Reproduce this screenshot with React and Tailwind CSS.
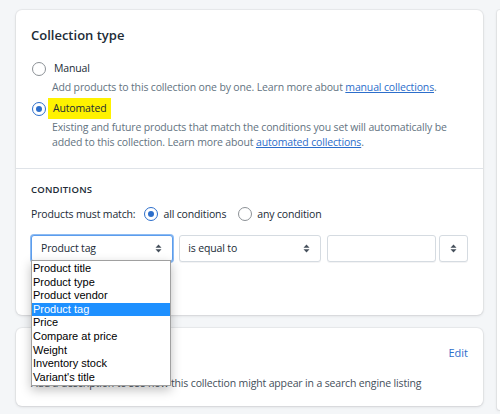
const font = { fontFamily: '"Open Sans", "Noto Sans", sans-serif' };

function Radio({ checked }) {
  return (
    <span
      className={`flex h-[14px] w-[14px] shrink-0 items-center justify-center rounded-full border bg-white ${
        checked ? 'border-[#2c6ecb]' : 'border-[#8c9196]'
      }`}
    >
      {checked && <span className="h-[6px] w-[6px] rounded-full bg-[#2c6ecb]" />}
    </span>
  );
}

function Arrows() {
  return (
    <svg width="7" height="9" viewBox="0 0 7 9" className="shrink-0">
      <path d="M3.5 0.5L6.5 3.7H0.5Z" fill="#454f5b" />
      <path d="M3.5 8.5L6.5 5.3H0.5Z" fill="#454f5b" />
    </svg>
  );
}

const options = [
  'Product title',
  'Product type',
  'Product vendor',
  'Product tag',
  'Price',
  'Compare at price',
  'Weight',
  'Inventory stock',
  "Variant's title",
];

export default function App() {
  return (
    <div
      className="relative flex h-[414px] w-[500px] overflow-hidden bg-[#f4f6f8] text-[#212b36]"
      style={font}
    >
      <div className="flex w-[483px] flex-col gap-[13px] pl-4 pt-[10px]">
        {/* collection type card */}
        <div className="h-[305px] rounded-[6px] bg-white shadow-[0_0_0_1px_rgba(63,63,68,0.05),0_1px_3px_0_rgba(63,63,68,0.15)]">
          <div className="border-b border-[#dfe3e8] px-[15px] pb-[18px] pt-[17px]">
            <h2 className="text-[13px] font-semibold leading-[16px]">Collection type</h2>
            <div className="mt-[18px] flex flex-col text-[10.5px] leading-[15px] tracking-[-0.15px]">
              <div className="flex items-center gap-[8px] pl-[1px]">
                <Radio />
                <span>Manual</span>
              </div>
              <p className="mt-[4px] pl-[21px] text-[#637381]">
                Add products to this collection one by one. Learn more about{' '}
                <span className="text-[#2c6ecb] underline">manual collections</span>.
              </p>
              <div className="mt-[3px] flex items-center gap-[2px] pl-[1px]">
                <Radio checked />
                <span className="bg-[#fff200] px-[5px] py-[3px]">Automated</span>
              </div>
              <p className="mt-[1px] pl-[21px] text-[#637381]">
                Existing and future products that match the conditions you set will automatically be
                added to this collection. Learn more about{' '}
                <span className="text-[#2c6ecb] underline">automated collections</span>.
              </p>
            </div>
          </div>
          <div className="px-[15px] pt-[15px]">
            <div className="text-[9.5px] font-semibold uppercase leading-[12px] tracking-[0.2px]">
              Conditions
            </div>
            <div className="mt-[10px] flex items-center text-[10.5px] leading-[16px] tracking-[-0.15px]">
              <span>Products must match:</span>
              <span className="ml-[9px] flex items-center gap-[5px]">
                <Radio checked />
                all conditions
              </span>
              <span className="ml-[12px] flex items-center gap-[5px]">
                <Radio />
                any condition
              </span>
            </div>
            <div className="mt-[13px] flex h-[27px] gap-[6px] text-[10.5px] tracking-[-0.15px]">
              <div className="flex w-[143px] items-center justify-between rounded-[3px] border border-[#5c9ded] bg-white pl-[9px] pr-[10px] shadow-[0_0_0_1px_#8dbbf2]">
                <span>Product tag</span>
                <Arrows />
              </div>
              <div className="flex w-[142px] items-center justify-between rounded-[3px] border border-[#d5dbe1] bg-white pl-[8px] pr-[10px] shadow-[0_1px_0_rgba(22,29,37,0.05)]">
                <span>is equal to</span>
                <Arrows />
              </div>
              <div className="w-[110px] rounded-[3px] border border-[#d5dbe1] bg-white shadow-[0_1px_0_rgba(22,29,37,0.05)]" />
              <div className="-ml-[3px] flex w-[29px] items-center justify-center rounded-[3px] border border-[#d5dbe1] bg-white shadow-[0_1px_0_rgba(22,29,37,0.05)]">
                <Arrows />
              </div>
            </div>
          </div>
        </div>

        {/* seo card */}
        <div className="h-[78px] rounded-[6px] bg-white px-[15px] pt-[17px] shadow-[0_0_0_1px_rgba(63,63,68,0.05),0_1px_3px_0_rgba(63,63,68,0.15)]">
          <div className="flex items-center justify-between text-[12px] leading-[16px]">
            <span className="font-semibold">Search engine listing</span>
            <span className="text-[11px] text-[#2c6ecb]">Edit</span>
          </div>
          <p className="mt-[15px] text-[10.5px] leading-[15px] tracking-[-0.15px] text-[#454f5b]">
            Add a description to see how this collection might appear in a search engine listing
          </p>
        </div>
      </div>

      <div className="ml-[14px] mt-[10px] h-[400px] w-[10px] rounded-l-[6px] bg-white shadow-[0_0_0_1px_rgba(63,63,68,0.05),0_1px_3px_0_rgba(63,63,68,0.15)]" />

      {/* open native select list */}
      <ul
        className="absolute left-[31px] top-[260px] w-[140px] border border-[#a0a0a0] bg-white py-[1px] text-[11px] leading-[13.6px] text-black shadow-[0_4px_10px_rgba(0,0,0,0.25)]"
        style={{ fontFamily: '"Liberation Sans", Arial, sans-serif' }}
      >
        {options.map((o) => (
          <li
            key={o}
            className={`px-[1px] ${o === 'Product tag' ? 'bg-[#1e90ff] text-white' : ''}`}
          >
            {o}
          </li>
        ))}
      </ul>
    </div>
  );
}
